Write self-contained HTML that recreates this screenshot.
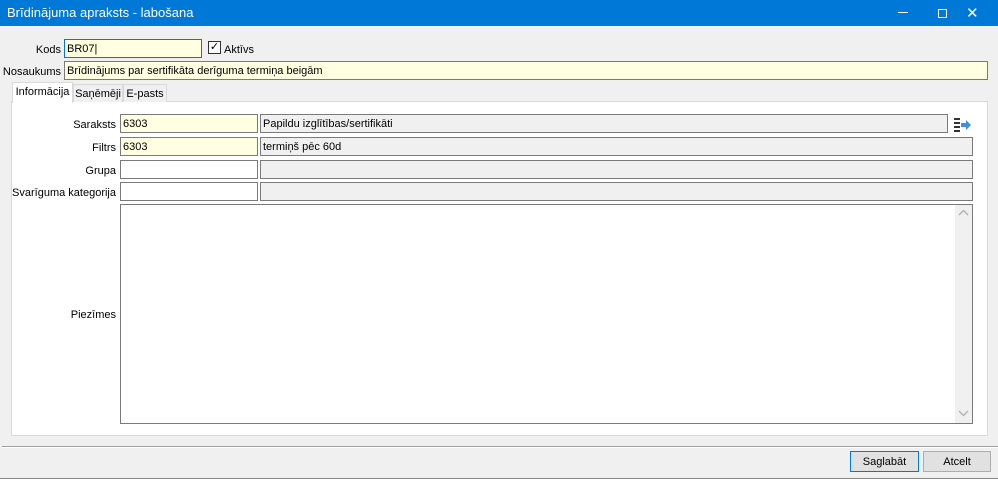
<!DOCTYPE html>
<html><head><meta charset="utf-8"><style>
*{box-sizing:border-box;margin:0;padding:0}
body{width:998px;height:479px;background:#f0f0f0;font-family:"Liberation Sans",sans-serif;font-size:11px;color:#000;position:relative;overflow:hidden}
.a{position:absolute}
.title{left:0;top:0;width:998px;height:26px;background:#0078d7;color:#fff;font-size:13px;line-height:26px;padding-left:7px}
.lbl{text-align:right;line-height:19px;padding-top:2px;white-space:nowrap}
.in{border:1px solid #7a7a7a;background:#fff;height:19px;line-height:17px;padding-left:2px;padding-top:1px;white-space:nowrap;overflow:hidden}
.y{background:#ffffe1}
.g{background:#f0f0f0}
.tab{border:1px solid #d9d9d9;border-bottom:none;background:#f0f0f0;line-height:17px;padding-top:1px;text-align:center;height:18px}
.btn{border:1px solid #adadad;background:#e1e1e1;text-align:center;line-height:19px;padding-top:1px;height:21px}
</style></head><body>
<div class="a title">Brīdinājuma apraksts - labošana</div>
<div class="a" style="left:898px;top:12px;width:10px;height:1px;background:#fff"></div>
<div class="a" style="left:938px;top:9px;width:9px;height:9px;border:1px solid #fff"></div>
<div class="a" style="left:966px;top:4px;color:#fff;font-size:15px">✕</div>

<div class="a lbl" style="left:0;width:61px;top:39px">Kods</div>
<div class="a in y" style="left:64px;top:39px;width:138px;border-color:#0078d7">BR07|</div>
<div class="a" style="left:208px;top:41px;width:13px;height:13px;border:1px solid #333;background:#fff;font-size:11px;line-height:11px;text-align:center">✓</div>
<div class="a lbl" style="left:224px;top:39px">Aktīvs</div>
<div class="a lbl" style="left:0;width:61px;top:61px">Nosaukums</div>
<div class="a in y" style="left:64px;top:61px;width:924px">Brīdinājums par sertifikāta derīguma termiņa beigām</div>

<div class="a" style="left:11px;top:101px;width:977px;height:335px;background:#fff;border:1px solid #d9d9d9"></div>
<div class="a tab" style="left:73px;top:84px;width:50px">Saņēmēji</div>
<div class="a tab" style="left:123px;top:84px;width:44px">E-pasts</div>
<div class="a tab" style="left:12px;top:82px;width:61px;height:21px;background:#fff;border-color:#d9d9d9">Informācija</div>

<div class="a lbl" style="left:0;width:116px;top:114px">Saraksts</div>
<div class="a in y" style="left:120px;top:114px;width:138px">6303</div>
<div class="a in g" style="left:260px;top:114px;width:688px">Papildu izglītības/sertifikāti</div>
<svg class="a" style="left:952px;top:115px" width="20" height="18"><g fill="#333"><rect x="2" y="3" width="6" height="2"/><rect x="2" y="7" width="6" height="2"/><rect x="2" y="11" width="6" height="2"/><rect x="2" y="15" width="6" height="2"/></g><path d="M9 8h5V5l5 5-5 5v-3H9z" fill="#3a8ee6"/></svg>

<div class="a lbl" style="left:0;width:116px;top:137px">Filtrs</div>
<div class="a in y" style="left:120px;top:137px;width:138px">6303</div>
<div class="a in g" style="left:260px;top:137px;width:713px">termiņš pēc 60d</div>
<div class="a lbl" style="left:0;width:116px;top:160px">Grupa</div>
<div class="a in" style="left:120px;top:160px;width:138px"></div>
<div class="a in g" style="left:260px;top:160px;width:713px"></div>
<div class="a lbl" style="left:0;width:116px;top:182px">Svarīguma kategorija</div>
<div class="a in" style="left:120px;top:182px;width:138px"></div>
<div class="a in g" style="left:260px;top:182px;width:713px"></div>

<div class="a in" style="left:120px;top:204px;width:853px;height:220px"></div>
<div class="a" style="left:955px;top:205px;width:17px;height:218px;background:#f0f0f0"></div>
<svg class="a" style="left:958px;top:209px" width="11" height="8"><path d="M1 6l4.5-4.5L10 6" fill="none" stroke="#b0b0b0" stroke-width="1.3"/></svg>
<svg class="a" style="left:958px;top:409px" width="11" height="8"><path d="M1 2l4.5 4.5L10 2" fill="none" stroke="#b0b0b0" stroke-width="1.3"/></svg>
<div class="a lbl" style="left:0;width:116px;top:304px">Piezīmes</div>

<div class="a" style="left:2px;top:446px;width:996px;height:1px;background:#a0a0a0"></div>
<div class="a" style="left:2px;top:447px;width:996px;height:1px;background:#fff"></div>
<div class="a btn" style="left:850px;top:451px;width:69px;border-color:#0078d7">Saglabāt</div>
<div class="a btn" style="left:923px;top:451px;width:68px">Atcelt</div>
<div class="a" style="left:0;top:478px;width:998px;height:1px;background:#888"></div>
</body></html>
